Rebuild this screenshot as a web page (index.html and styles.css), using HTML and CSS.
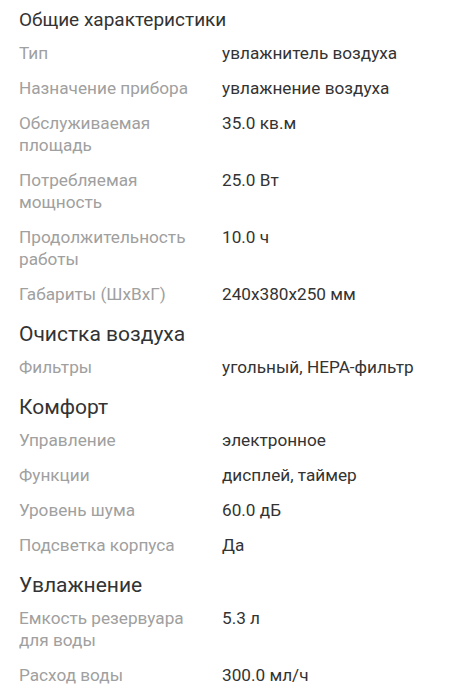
FILE: index.html
```html
<!DOCTYPE html>
<html lang="ru">
<head>
<meta charset="utf-8">
<link rel="stylesheet" href="styles.css">
</head>
<body>
<div class="page">
  <section class="section">
    <h2 class="title title-main">Общие характеристики</h2>
    <div class="row"><div class="label">Тип</div><div class="value">увлажнитель воздуха</div></div>
    <div class="row"><div class="label">Назначение прибора</div><div class="value">увлажнение воздуха</div></div>
    <div class="row"><div class="label">Обслуживаемая площадь</div><div class="value">35.0 кв.м</div></div>
    <div class="row"><div class="label">Потребляемая мощность</div><div class="value">25.0 Вт</div></div>
    <div class="row"><div class="label">Продолжительность работы</div><div class="value">10.0 ч</div></div>
    <div class="row"><div class="label">Габариты (ШхВхГ)</div><div class="value">240x380x250 мм</div></div>
  </section>
  <section class="section">
    <h2 class="title">Очистка воздуха</h2>
    <div class="row"><div class="label">Фильтры</div><div class="value">угольный, HEPA-фильтр</div></div>
  </section>
  <section class="section">
    <h2 class="title">Комфорт</h2>
    <div class="row"><div class="label">Управление</div><div class="value">электронное</div></div>
    <div class="row"><div class="label">Функции</div><div class="value">дисплей, таймер</div></div>
    <div class="row"><div class="label">Уровень шума</div><div class="value">60.0 дБ</div></div>
    <div class="row"><div class="label">Подсветка корпуса</div><div class="value">Да</div></div>
  </section>
  <section class="section">
    <h2 class="title">Увлажнение</h2>
    <div class="row"><div class="label">Емкость резервуара для воды</div><div class="value">5.3 л</div></div>
    <div class="row"><div class="label">Расход воды</div><div class="value">300.0 мл/ч</div></div>
  </section>
</div>
</body>
</html>
```
FILE: styles.css
```css
html, body {
  margin: 0;
  padding: 0;
  background: #ffffff;
}
body {
  font-family: Roboto, "Noto Sans", sans-serif;
  color: #333333;
}
.page {
  padding: 6px 19px 0 19px;
}
.section + .section {
  margin-top: 8px;
}
.title {
  margin: 0 0 2px 0;
  font-size: 21px;
  line-height: 28px;
  font-weight: 400;
  color: #333333;
}
.title-main {
  font-size: 19px;
}
.row {
  display: grid;
  grid-template-columns: 185px 1fr;
  column-gap: 18px;
  padding: 6px 0 7px 0;
  font-size: 17.2px;
  line-height: 22px;
}
.label {
  color: #a0a0a0;
}
.value {
  color: #333333;
}
```
